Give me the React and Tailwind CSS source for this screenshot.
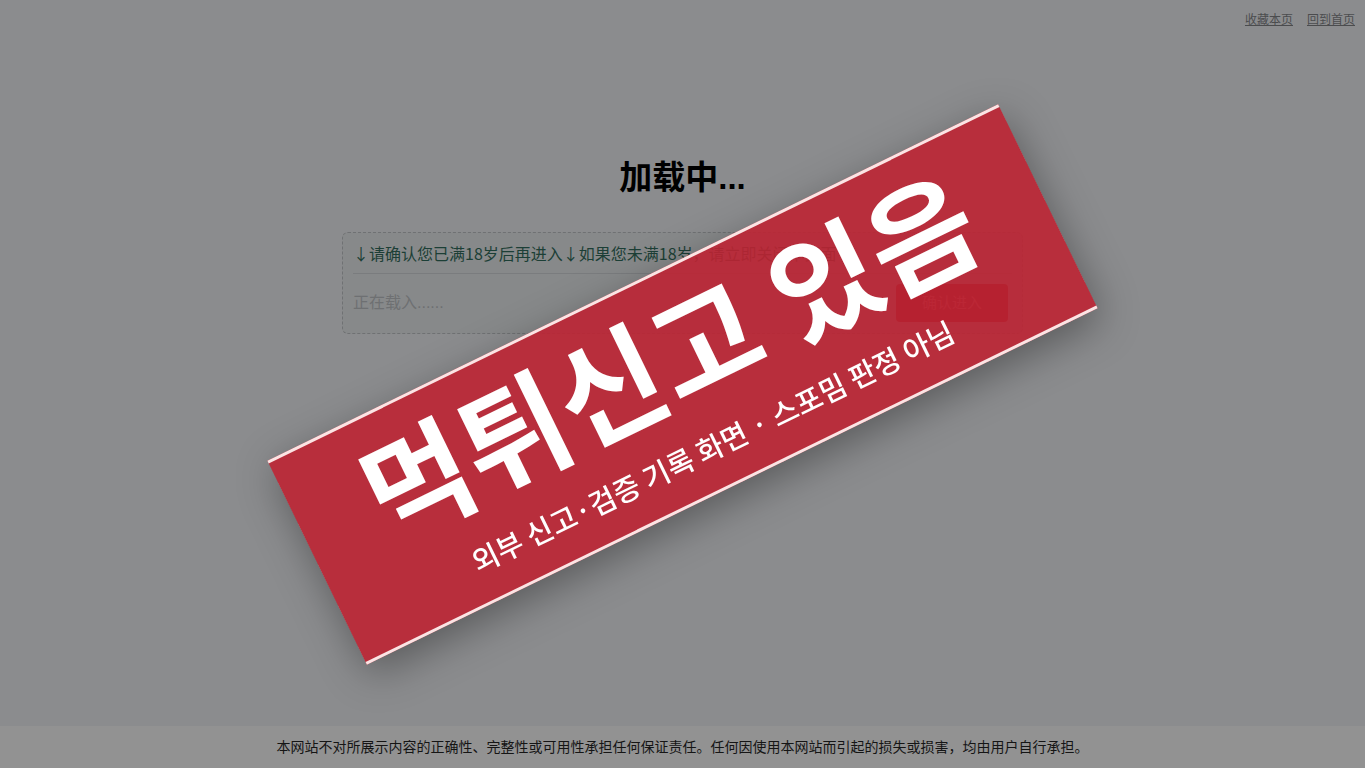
export default function App() {
  const zh = { fontFamily: '"Liberation Sans", "Noto Sans CJK SC", sans-serif' }

  return (
    <div className="relative h-screen bg-[#8b8c8e] flex flex-col overflow-hidden" style={zh}>
      {/* top links */}
      <div className="flex justify-end gap-[14px] pr-[10px] pt-[12px] h-[32px] text-[12px] leading-4 text-[#4b4c4e]">
        <a href="#" className="underline">收藏本页</a>
        <a href="#" className="underline">回到首页</a>
      </div>

      {/* main content */}
      <div className="flex flex-col items-center">
        <h1 className="mt-[127px] text-[33px] leading-[38px] font-bold text-black">加载中...</h1>

        <div className="mt-[35px] w-[681px] rounded-md border border-dashed border-[#6f7173] bg-[#87898a] px-[10px] pt-[8px] pb-[11px]">
          <p
            className="text-[16px] leading-6 text-[#1c3f36]"
            style={{ fontFamily: '"Noto Sans CJK SC", sans-serif' }}
          >
            ↓请确认您已满18岁后再进入↓如果您未满18岁，请立即关闭本页面
          </p>
          <div className="mt-[8px] border-t border-[#7a7c7e]" />
          <div className="mt-[10px] flex items-center">
            <span className="text-[16px] text-[#6e7072]">正在载入......</span>
            <button className="ml-auto mr-[4px] h-[38px] w-[112px] rounded-[4px] bg-[#7d1018] text-[15px] text-[#b04a52]">
              确认进入
            </button>
          </div>
        </div>
      </div>

      {/* footer */}
      <div className="mt-auto h-[42px] flex items-center justify-center bg-[#929292] text-[14px] text-[#151515]">
        本网站不对所展示内容的正确性、完整性或可用性承担任何保证责任。任何因使用本网站而引起的损失或损害，均由用户自行承担。
      </div>

      {/* report banner */}
      <div className="pointer-events-none fixed inset-0 flex items-center justify-center">
        <div
          className="-rotate-[26deg] w-[813px] h-[227px] pb-[12px] flex flex-col items-center justify-center border-y-[3px] border-[#fbe4e4] bg-[#bc2433]/[0.9] shadow-[0_12px_40px_rgba(0,0,0,0.35)]"
          style={{ fontFamily: '"Noto Sans CJK KR", "Noto Sans", sans-serif' }}
        >
          <div className="text-[116px] leading-none font-bold text-white">먹튀신고 있음</div>
          <div className="mt-[32px] text-[29px] leading-none font-medium text-white">
            외부 신고·검증 기록 화면 · 스포밈 판정 아님
          </div>
        </div>
      </div>
    </div>
  )
}
